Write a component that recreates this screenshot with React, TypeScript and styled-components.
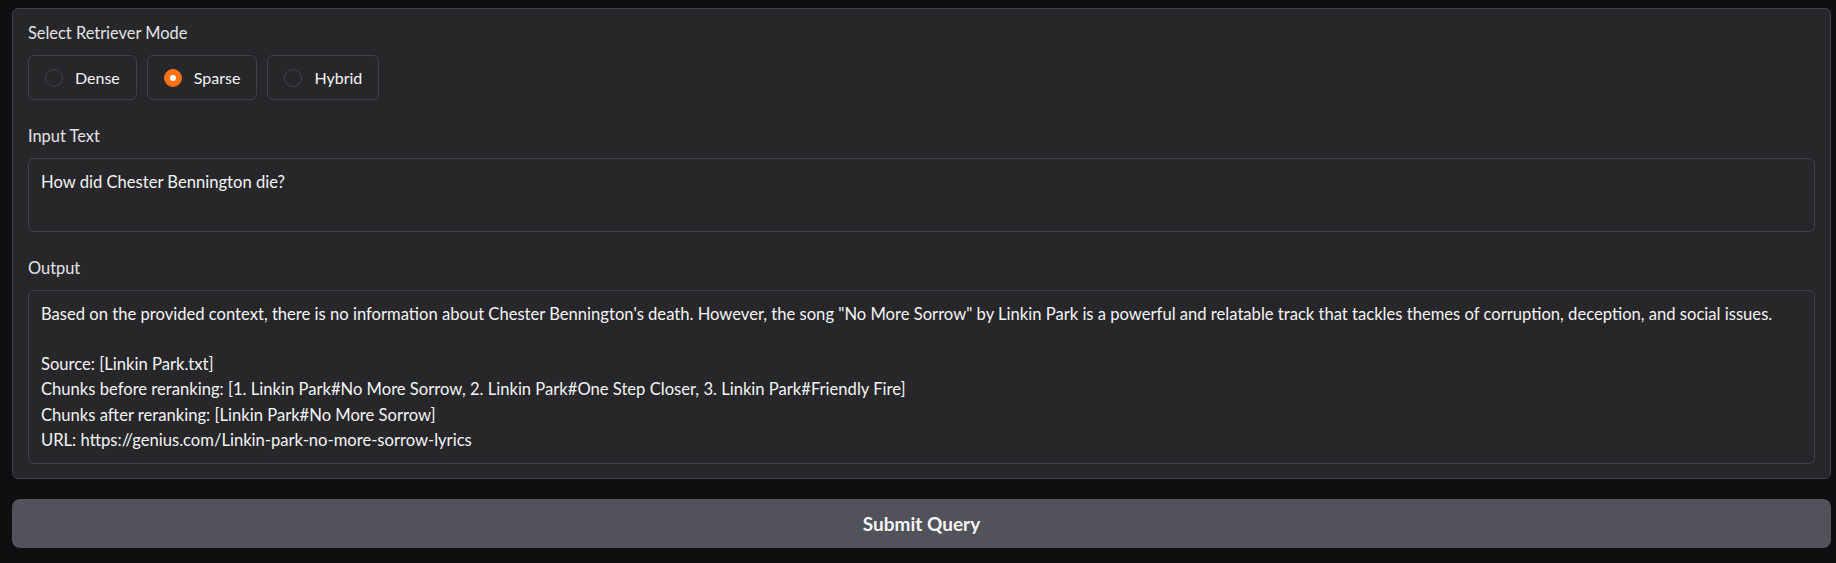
import React, { useState } from 'react';
import styled, { createGlobalStyle } from 'styled-components';

const GlobalStyle = createGlobalStyle`
  html, body {
    margin: 0;
    padding: 0;
    background: #0f0f11;
    font-family: Lato, "Open Sans", sans-serif;
    color: #f4f4f5;
  }
`;

const Page = styled.div`
  padding: 8px 5px 16px 12px;
  display: flex;
  flex-direction: column;
  gap: 20px;
`;

const Panel = styled.div`
  background: #27272a;
  border: 1px solid #3f3f46;
  border-radius: 6px;
  padding: 14px 15px 14px 15px;
  display: flex;
  flex-direction: column;
  gap: 26px;
`;

const Field = styled.div`
  display: flex;
  flex-direction: column;
`;

const Label = styled.div`
  font-size: 16.4px;
  line-height: 20px;
  color: #e4e4e7;
  margin-bottom: 12px;
`;

const RadioGroup = styled.div`
  display: flex;
  gap: 10px;
`;

const RadioOption = styled.label`
  display: flex;
  align-items: center;
  gap: 12px;
  height: 45px;
  box-sizing: border-box;
  padding: 0 16px;
  border: 1px solid #3f3f46;
  border-radius: 6px;
  font-size: 16px;
  color: #f4f4f5;
  cursor: pointer;
`;

const RadioDot = styled.span<{ $checked: boolean }>`
  width: 18px;
  height: 18px;
  box-sizing: border-box;
  border-radius: 50%;
  border: 1px solid ${(p) => (p.$checked ? '#f97316' : '#3f3f46')};
  background: ${(p) => (p.$checked ? '#f97316' : '#27272a')};
  display: flex;
  align-items: center;
  justify-content: center;

  &::after {
    content: '';
    width: 6px;
    height: 6px;
    border-radius: 50%;
    background: #fff;
    display: ${(p) => (p.$checked ? 'block' : 'none')};
  }
`;

const TextBox = styled.div<{ $rows: number }>`
  border: 1px solid #3f3f46;
  border-radius: 6px;
  background: #27272a;
  padding: 11px 12px 10px;
  font-size: 16.6px;
  line-height: 25.3px;
  min-height: ${(p) => p.$rows * 25.3}px;
  white-space: pre-wrap;
  color: #f4f4f5;
`;

const SubmitButton = styled.button`
  height: 49px;
  border: none;
  border-radius: 8px;
  background: #52525b;
  color: #f4f4f5;
  font-family: inherit;
  font-size: 19px;
  font-weight: 700;
  cursor: pointer;
`;

const modes = ['Dense', 'Sparse', 'Hybrid'];

const output = `Based on the provided context, there is no information about Chester Bennington's death. However, the song "No More Sorrow" by Linkin Park is a powerful and relatable track that tackles themes of corruption, deception, and social issues.

Source: [Linkin Park.txt]
Chunks before reranking: [1. Linkin Park#No More Sorrow, 2. Linkin Park#One Step Closer, 3. Linkin Park#Friendly Fire]
Chunks after reranking: [Linkin Park#No More Sorrow]
URL: https://genius.com/Linkin-park-no-more-sorrow-lyrics`;

export default function App() {
  const [mode, setMode] = useState('Sparse');

  return (
    <>
      <GlobalStyle />
      <Page>
        <Panel>
          <Field>
            <Label>Select Retriever Mode</Label>
            <RadioGroup>
              {modes.map((m) => (
                <RadioOption key={m} onClick={() => setMode(m)}>
                  <RadioDot $checked={mode === m} />
                  {m}
                </RadioOption>
              ))}
            </RadioGroup>
          </Field>
          <Field>
            <Label>Input Text</Label>
            <TextBox $rows={2}>How did Chester Bennington die?</TextBox>
          </Field>
          <Field>
            <Label>Output</Label>
            <TextBox $rows={6}>{output}</TextBox>
          </Field>
        </Panel>
        <SubmitButton>Submit Query</SubmitButton>
      </Page>
    </>
  );
}
